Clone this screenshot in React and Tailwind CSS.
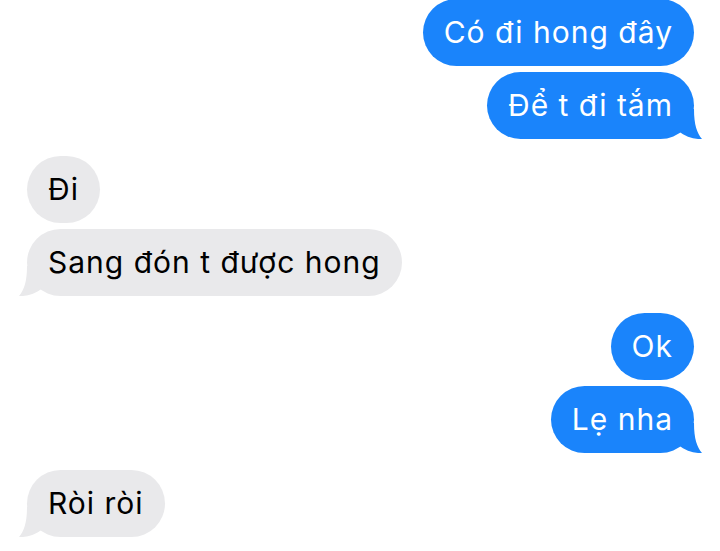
import { Fragment } from "react";

const messages = [
  { text: "Có đi hong đây", me: true, tail: false },
  { text: "Để t đi tắm", me: true, tail: true },
  { text: "Đi", me: false, tail: false, gap: true },
  { text: "Sang đón t được hong", me: false, tail: true },
  { text: "Ok", me: true, tail: false, gap: true },
  { text: "Lẹ nha", me: true, tail: true },
  { text: "Ròi ròi", me: false, tail: true, gap: true },
];

function Tail({ me }) {
  return (
    <svg
      width="40"
      height="30"
      viewBox="0 0 40 30"
      className={
        me
          ? "absolute -right-[8px] bottom-0 fill-[#1a84fb]"
          : "absolute -left-[8px] bottom-0 -scale-x-100 fill-[#e9e9eb]"
      }
    >
      <path d="M10 0 H32 C32 16 35 24 40 30 C32 30.5 24 28 16 22 L10 20 Z" />
    </svg>
  );
}

function Bubble({ text, me, tail }) {
  return (
    <div
      className={
        me
          ? "relative self-end h-[67px] flex items-center px-[21px] rounded-full bg-[#1a84fb] text-white"
          : "relative self-start h-[67px] flex items-center px-[21px] rounded-full bg-[#e9e9eb] text-black"
      }
    >
      {tail && <Tail me={me} />}
      <span className="relative text-[30px] leading-none tracking-[1px] -mt-[2px]">{text}</span>
    </div>
  );
}

export default function App() {
  return (
    <div
      className="w-[720px] h-[551px] overflow-hidden bg-white pl-[27px] pr-[26px]"
      style={{ fontFamily: "Inter, 'Noto Sans', sans-serif" }}
    >
      <div className="flex flex-col -mt-[1px]">
        {messages.map((m, i) => (
          <Fragment key={i}>
            {i > 0 && <div className={m.gap ? "h-[17px]" : "h-[6px]"} />}
            <Bubble {...m} />
          </Fragment>
        ))}
      </div>
    </div>
  );
}
